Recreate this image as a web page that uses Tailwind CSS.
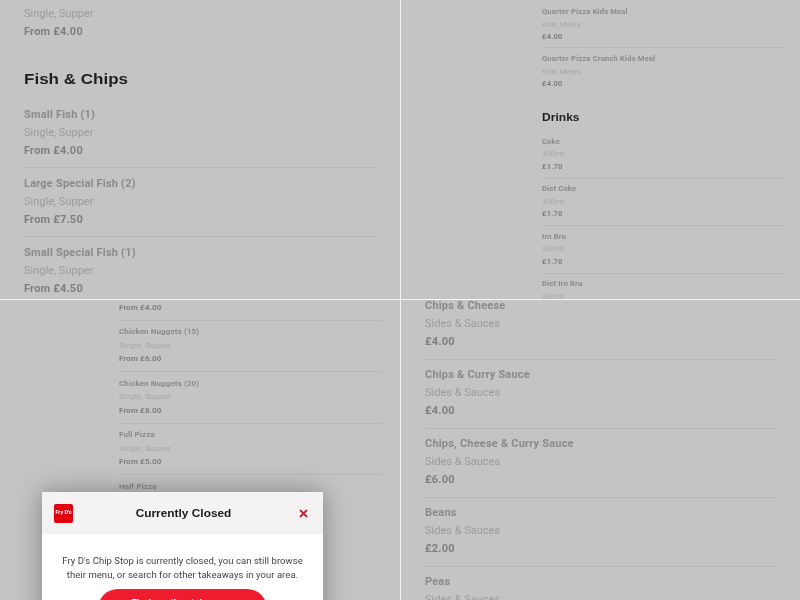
<!DOCTYPE html>
<html><head><meta charset="utf-8"><script src="https://cdn.jsdelivr.net/npm/@tailwindcss/browser@4"></script></head>
<body class="bg-white font-['Roboto',sans-serif]">
<div class="w-[800px] h-[600px] overflow-hidden grid grid-cols-[400px_399px] grid-rows-[299px_300px] gap-px bg-[#f4f4f4] blur-[0.3px]">

<section class="bg-[#c4c4c4] overflow-hidden px-6 text-[11px] leading-[18px] tracking-[0.2px]">
  <div class="-mt-[13px]">
    <div class="h-[18px]"></div>
    <p class="text-[#9b9b9b] tracking-normal">Single, Supper</p>
    <p class="font-bold text-[#7f7f7f]">From £4.00</p>
    <h2 class="mt-[26px] mb-[14.5px] font-['Liberation_Sans'] font-bold text-[15px] leading-[24px] tracking-normal text-[#1f1f1f] origin-left scale-x-[1.135]">Fish &amp; Chips</h2>
    <div class="border-b border-[#b6b6b6] pb-[7.5px] mb-[6.5px]"><p class="font-bold text-[#8a8a8a]">Small Fish (1)</p><p class="text-[#9b9b9b] tracking-normal">Single, Supper</p><p class="font-bold text-[#7f7f7f]">From £4.00</p></div>
    <div class="border-b border-[#b6b6b6] pb-[7.5px] mb-[6.5px]"><p class="font-bold text-[#8a8a8a]">Large Special Fish (2)</p><p class="text-[#9b9b9b] tracking-normal">Single, Supper</p><p class="font-bold text-[#7f7f7f]">From £7.50</p></div>
    <div><p class="font-bold text-[#8a8a8a]">Small Special Fish (1)</p><p class="text-[#9b9b9b] tracking-normal">Single, Supper</p><p class="font-bold text-[#7f7f7f]">From £4.50</p></div>
  </div>
</section>

<section class="bg-[#c4c4c4] overflow-hidden pl-[141px] pr-[16px] text-[7.5px] leading-[12.5px] tracking-[0.2px]">
  <div class="-mt-[1px]">
    <div class="border-t border-b border-[#b6b6b6] pt-[6px] pb-[3.75px]"><p class="font-bold text-[#8a8a8a]">Quarter Pizza Kids Meal</p><p class="text-[#a6a6a6]">Kids Meals</p><p class="font-bold text-[#7f7f7f]">£4.00</p></div>
    <div class="pt-[5px]"><p class="font-bold text-[#8a8a8a]">Quarter Pizza Crunch Kids Meal</p><p class="text-[#a6a6a6]">Kids Meals</p><p class="font-bold text-[#7f7f7f]">£4.00</p></div>
    <h2 class="mt-[18.25px] mb-[10.5px] font-['Liberation_Sans'] font-bold text-[11.5px] leading-[16px] tracking-normal text-[#1f1f1f] origin-left scale-x-[1.05]">Drinks</h2>
    <div class="border-b border-[#b6b6b6] pb-[4.6px] mb-[4.5px]"><p class="font-bold text-[#8a8a8a]">Coke</p><p class="text-[#a6a6a6]">330ml</p><p class="font-bold text-[#7f7f7f]">£1.70</p></div>
    <div class="border-b border-[#b6b6b6] pb-[4.6px] mb-[4.5px]"><p class="font-bold text-[#8a8a8a]">Diet Coke</p><p class="text-[#a6a6a6]">330ml</p><p class="font-bold text-[#7f7f7f]">£1.70</p></div>
    <div class="border-b border-[#b6b6b6] pb-[4.6px] mb-[4.5px]"><p class="font-bold text-[#8a8a8a]">Irn Bru</p><p class="text-[#a6a6a6]">330ml</p><p class="font-bold text-[#7f7f7f]">£1.70</p></div>
    <div><p class="font-bold text-[#8a8a8a]">Diet Irn Bru</p><p class="text-[#a6a6a6]">330ml</p></div>
  </div>
</section>

<section class="relative bg-[#c4c4c4] overflow-hidden pl-[119px] pr-[18px] text-[8px] leading-[13.5px] tracking-[0.1px]">
  <div class="mt-[0.5px]">
    <div class="border-b border-[#b6b6b6] pb-[5.5px] mb-[4.6px]"><p class="font-bold text-[#7f7f7f]">From £4.00</p></div>
    <div class="border-b border-[#b6b6b6] pb-[5.5px] mb-[4.6px]"><p class="font-bold text-[#8a8a8a]">Chicken Nuggets (15)</p><p class="text-[#a6a6a6]">Single, Supper</p><p class="font-bold text-[#7f7f7f]">From £6.00</p></div>
    <div class="border-b border-[#b6b6b6] pb-[5.5px] mb-[4.6px]"><p class="font-bold text-[#8a8a8a]">Chicken Nuggets (20)</p><p class="text-[#a6a6a6]">Single, Supper</p><p class="font-bold text-[#7f7f7f]">From £8.00</p></div>
    <div class="border-b border-[#b6b6b6] pb-[5.5px] mb-[4.6px]"><p class="font-bold text-[#8a8a8a]">Full Pizza</p><p class="text-[#a6a6a6]">Single, Supper</p><p class="font-bold text-[#7f7f7f]">From £5.00</p></div>
    <div><p class="font-bold text-[#8a8a8a]">Half Pizza</p></div>
  </div>
  <div class="absolute left-[42px] top-[192px] w-[281px] bg-white shadow-[0_0_24px_rgba(0,0,0,0.35)] tracking-normal">
    <div class="h-[42px] bg-[#f4f2f2] flex items-center justify-between pl-3 pr-[15px]">
      <div class="w-[19px] h-[19px] rounded-[2px] bg-[#e2000f] flex items-center justify-center text-white font-bold text-[5.5px] whitespace-nowrap">Fry D's</div>
      <h3 class="pl-[5px] pt-px font-['Liberation_Sans'] font-bold text-[11px] text-[#1a1a1a] scale-x-[1.08]">Currently Closed</h3>
      <div class="w-[19px] flex justify-end"><svg width="9" height="9" viewBox="0 0 9 9" fill="none" stroke="#c8202c" stroke-width="1.8"><path d="M1 1l7 7M8 1l-7 7"/></svg></div>
    </div>
    <div class="pt-[20px] px-3 text-center text-[9.5px] leading-[13.5px] tracking-[0.05px] text-[#444]">
      <p>Fry D's Chip Stop is currently closed, you can still browse<br>their menu, or search for other takeaways in your area.</p>
      <button class="mt-[7.5px] mx-auto block w-[169px] h-[40px] pb-[10px] rounded-[20px] bg-[#ee1c2e] text-white font-bold text-[10px]">Find another takeaway</button>
    </div>
  </div>
</section>

<section class="bg-[#c4c4c4] overflow-hidden pl-6 pr-[23px] text-[11px] leading-[18px] tracking-[0.2px]">
  <div class="-mt-[3px]">
    <div class="border-b border-[#b6b6b6] pb-[7.5px] mb-[6.5px]"><p class="font-bold text-[#8a8a8a]">Chips &amp; Cheese</p><p class="text-[#9b9b9b] tracking-normal">Sides &amp; Sauces</p><p class="font-bold text-[#7f7f7f]">£4.00</p></div>
    <div class="border-b border-[#b6b6b6] pb-[7.5px] mb-[6.5px]"><p class="font-bold text-[#8a8a8a]">Chips &amp; Curry Sauce</p><p class="text-[#9b9b9b] tracking-normal">Sides &amp; Sauces</p><p class="font-bold text-[#7f7f7f]">£4.00</p></div>
    <div class="border-b border-[#b6b6b6] pb-[7.5px] mb-[6.5px]"><p class="font-bold text-[#8a8a8a]">Chips, Cheese &amp; Curry Sauce</p><p class="text-[#9b9b9b] tracking-normal">Sides &amp; Sauces</p><p class="font-bold text-[#7f7f7f]">£6.00</p></div>
    <div class="border-b border-[#b6b6b6] pb-[7.5px] mb-[6.5px]"><p class="font-bold text-[#8a8a8a]">Beans</p><p class="text-[#9b9b9b] tracking-normal">Sides &amp; Sauces</p><p class="font-bold text-[#7f7f7f]">£2.00</p></div>
    <div><p class="font-bold text-[#8a8a8a]">Peas</p><p class="text-[#9b9b9b] tracking-normal">Sides &amp; Sauces</p></div>
  </div>
</section>
</div>
</body></html>
